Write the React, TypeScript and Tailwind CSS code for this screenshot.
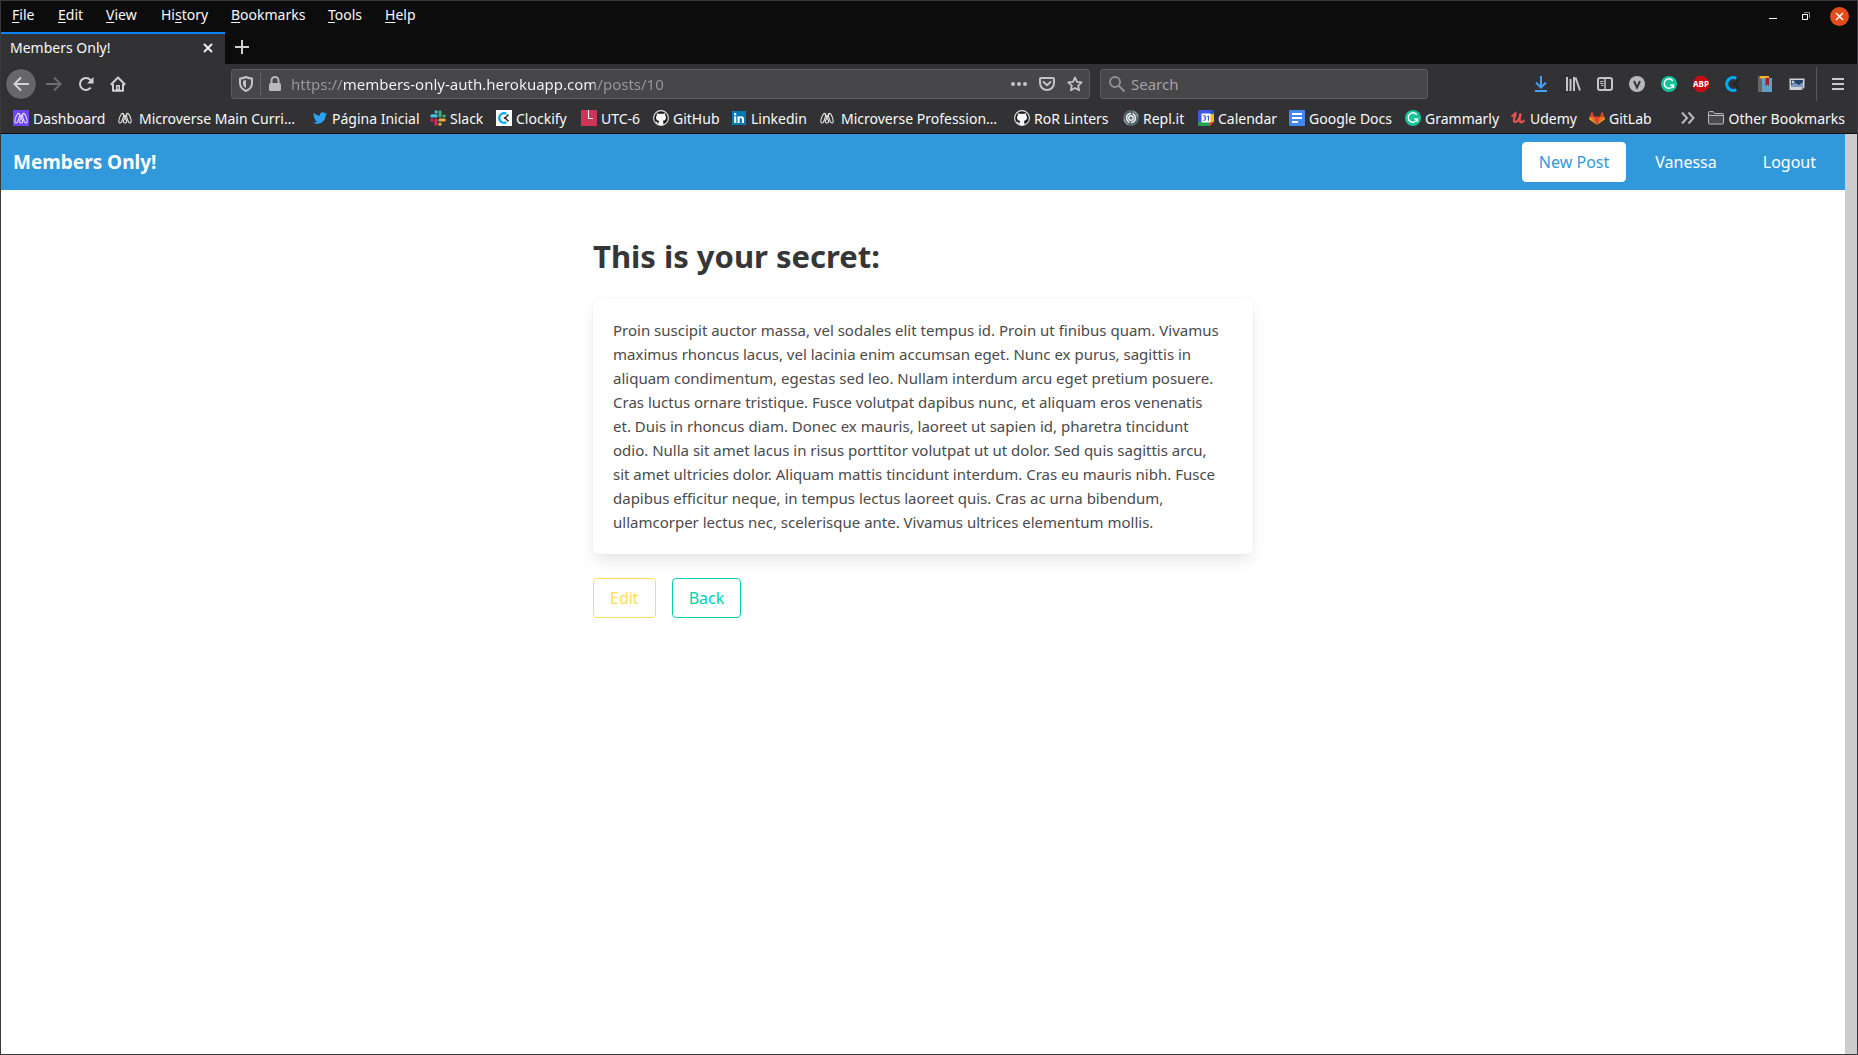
import React from "react";
import { FaTwitter, FaLinkedin } from "react-icons/fa";

function Svg({ children, className = "size-4", box = "0 0 16 16" }: { children: React.ReactNode; className?: string; box?: string }) {
  return (
    <svg viewBox={box} className={className} fill="none" aria-hidden="true">
      {children}
    </svg>
  );
}

function MicroverseIcon({ filled = false }: { filled?: boolean }) {
  return (
    <Svg className="size-4 shrink-0">
      {filled && <rect width="16" height="16" fill="#6f45f5" />}
      <g stroke={filled ? "#e4dcff" : "#e6e6e6"} strokeWidth="1.1" strokeLinecap="round" strokeLinejoin="round">
        <ellipse cx="4.200" cy="8.200" rx="1.700" ry="5" transform="rotate(18 4.200 8.200)" />
        <ellipse cx="11.800" cy="8.200" rx="1.700" ry="5" transform="rotate(-18 11.800 8.200)" />
        <path d="M5.800 3.500C7 4.500 7.500 6.500 9.400 10.500c.7 1.500 0 2.500-1.400 2.500s-2.100-1-1.400-2.500C8.500 6.500 9 4.500 10.200 3.500" />
      </g>
    </Svg>
  );
}

function SlackIcon() {
  return (
    <Svg>
      <g strokeWidth="3.200" strokeLinecap="round">
        <path d="M6.100 5.900H1.900M6.100 1.800v.1" stroke="#4bbfe0" />
        <path d="M10 6V1.900M14.200 6h-.1" stroke="#3dae7c" />
        <path d="M10 10h4.200M10 14.200v-.1" stroke="#e5b13a" />
        <path d="M6 10v4.200M1.900 10H2" stroke="#d8285c" />
      </g>
    </Svg>
  );
}

function ClockifyIcon({ light = false }: { light?: boolean }) {
  return (
    <Svg>
      {light && <rect width="16" height="16" fill="#fff" />}
      <g transform={light ? "translate(2 2) scale(.75)" : undefined}>
        <path d="M11.200 2.400A6.400 6.400 0 1 0 11.200 13.600" stroke="#03a9f4" strokeWidth="3" />
        <path d="M14 3.500 9.600 8l4.400 4.500" stroke={light ? "#333" : "#242426"} strokeWidth="2" />
        <circle cx="9" cy="8" r="1.500" fill={light ? "#333" : "#242426"} />
      </g>
    </Svg>
  );
}

function TimeIcon() {
  return (
    <Svg>
      <rect width="16" height="16" fill="#cb3557" />
      <path d="M7.500 0v8.500H12" stroke="#fff" />
    </Svg>
  );
}

function GithubBadge() {
  return (
    <Svg>
      <circle cx="8" cy="8" r="7.400" fill="#1b1b1d" stroke="#e8e8e8" strokeWidth="1.100" />
      <path
        d="M4 3.300c.9 0 1.500.4 2 .8.600-.2 1.300-.3 2-.3s1.400.1 2 .3c.5-.4 1.100-.8 2-.8.300.8.300 1.400.1 1.900.6.700.9 1.400.9 2.300 0 2.300-1.400 3.100-3.200 3.400.4.400.6.900.6 1.600V15H5.600v-1.400c-1.400.2-1.900-.4-2.300-1.200-.2-.4-.5-.6-.8-.9 1-.2 1.400.4 1.800.9.300.4.800.5 1.400.3.100-.7.300-1.300.5-1.800C4.400 10.600 3 9.800 3 7.500c0-.9.300-1.600.9-2.300-.2-.5-.2-1.100.1-1.900Z"
        fill="#f7f7f7"
      />
    </Svg>
  );
}

function LinkedinBadge() {
  return (
    <span className="flex size-4 items-center justify-center">
      <span className="flex size-[14px] items-center justify-center bg-white">
        <FaLinkedin className="size-4 shrink-0 text-[#0077b5]" />
      </span>
    </span>
  );
}

function ReplIcon() {
  return (
    <Svg>
      <circle cx="8" cy="8" r="8" fill="#56676e" />
      <circle cx="8" cy="8" r="2.200" stroke="#f2f2f2" strokeWidth="1.400" />
      <path d="M8 3.600C5 3.600 3.400 6 3.600 8.400c.2 2 1.300 3.400 2.800 4.200M8 12.400c3 0 4.600-2.400 4.400-4.800-.2-2-1.300-3.400-2.800-4.200" stroke="#f2f2f2" strokeWidth="1.500" />
      <path d="M1.200 9.500c.5 2.500 2 4.300 4 5M14.800 6.500c-.5-2.500-2-4.300-4-5" stroke="#c8d0d3" strokeWidth=".8" />
    </Svg>
  );
}

function CalendarIcon() {
  return (
    <Svg>
      <path d="M1.500 0H12v4H4v12H1.500A1.500 1.500 0 0 1 0 14.500v-13A1.500 1.500 0 0 1 1.500 0Z" fill="#4257e8" />
      <path d="M12 0h2.500A1.500 1.500 0 0 1 16 1.500V4h-4Z" fill="#2b55d0" />
      <path d="M12 4h4v8h-4Z" fill="#fbbc04" />
      <path d="M0 12h12v4H1.500A1.500 1.500 0 0 1 0 14.500Z" fill="#22a152" />
      <path d="M12 16v-4h4Z" fill="#ea4335" />
      <path d="M3.500 3.500H12.500v9h-9Z" fill="#fff" />
      <path d="M5 5.800h2.300v2H6m1.300 0v2.400H5M9.200 6.600l1.300-.8v5" stroke="#4257e8" />
    </Svg>
  );
}

function DocsIcon() {
  return (
    <Svg>
      <rect width="16" height="16" rx="1" fill="#4387f5" />
      <path d="M3 4h10M3 8h10M3 12h6" stroke="#fff" strokeWidth="2" />
    </Svg>
  );
}

function GrammarlyIcon() {
  return (
    <Svg>
      <circle cx="8" cy="8" r="8" fill="#15c39a" />
      <path d="M11.700 4.700A4.700 4.700 0 1 0 12.400 9H9.200M12.400 8.500V12" stroke="#fff" strokeWidth="1.500" />
    </Svg>
  );
}

function UdemyIcon() {
  return (
    <Svg>
      <path d="M1.500 6.200C3 5.800 4.600 4.600 5.500 3c.7 1-1.800 5.500-1.600 7.700.2 2 2.600 1.500 4-.2C9.500 8.600 10 6 10.600 3.600M10.800 3.500c-.9 3-2.300 8.600.4 8.800 1.400 0 2.200-1 3-2.300" stroke="#ea5252" strokeWidth="2.200" strokeLinejoin="round" />
    </Svg>
  );
}

function GitlabIcon() {
  return (
    <Svg>
      <path d="m8 15 3-8.500H5Z" fill="#e24329" />
      <path d="M8 15 5 6.500H.8ZM8 15l3-8.500h4.200Z" fill="#fc6d26" />
      <path d="M.8 6.500 0 9.200l8 5.800ZM15.200 6.500l.8 2.700L8 15Z" fill="#fca326" />
      <path d="M.8 6.500H5L3 1ZM15.200 6.500H11L13 1Z" fill="#e24329" />
    </Svg>
  );
}

const bookmarks = [
  { label: "Dashboard", icon: <MicroverseIcon filled />, width: "w-[104px] gap-1" },
  { label: "Microverse Main Curri…", icon: <MicroverseIcon />, width: "w-[195px] gap-[6px]" },
  { label: "Página Inicial", icon: <FaTwitter className="mx-px size-[14px] text-[#2ba3ef]" />, width: "w-[118px] gap-1" },
  { label: "Slack", icon: <SlackIcon />, width: "w-[66px] gap-1" },
  { label: "Clockify", icon: <ClockifyIcon light />, width: "w-[85px] gap-1" },
  { label: "UTC-6", icon: <TimeIcon />, width: "w-[72px] gap-1" },
  { label: "GitHub", icon: <GithubBadge />, width: "w-[78px] gap-1" },
  { label: "Linkedin", icon: <LinkedinBadge />, width: "w-[88px] gap-1" },
  { label: "Microverse Profession…", icon: <MicroverseIcon />, width: "w-[195px] gap-[6px]" },
  { label: "RoR Linters", icon: <GithubBadge />, width: "w-[109px] gap-1" },
  { label: "Repl.it", icon: <ReplIcon />, width: "w-[75px] gap-1" },
  { label: "Calendar", icon: <CalendarIcon />, width: "w-[91px] gap-1" },
  { label: "Google Docs", icon: <DocsIcon />, width: "w-[116px] gap-1" },
  { label: "Grammarly", icon: <GrammarlyIcon />, width: "w-[105px] gap-1" },
  { label: "Udemy", icon: <UdemyIcon />, width: "w-[79px] gap-1" },
  { label: "GitLab", icon: <GitlabIcon />, width: "w-[65px] gap-1" },
];

const menus: { before?: string; key: string; after: string; width: string }[] = [
  { key: "F", after: "ile", width: "w-[46px]" },
  { key: "E", after: "dit", width: "w-[48px]" },
  { key: "V", after: "iew", width: "w-[55px]" },
  { before: "Hi", key: "s", after: "tory", width: "w-[70px]" },
  { key: "B", after: "ookmarks", width: "w-[97px]" },
  { key: "T", after: "ools", width: "w-[57px]" },
  { key: "H", after: "elp", width: "w-[57px]" },
];

function MenuBar() {
  return (
    <div className="flex h-[31px] shrink-0 items-start justify-between">
      <nav aria-label="Menu" className="flex h-[29px] pl-[11px]">
        {menus.map((m) => (
          <button key={m.key + m.after} className={"pb-[2px] text-left whitespace-nowrap " + m.width}>
            {m.before}
            <span className="underline decoration-1 underline-offset-2">{m.key}</span>
            {m.after}
          </button>
        ))}
      </nav>
      <div className="flex h-[30px] items-center gap-[15px] pr-2">
        <button aria-label="Minimize" className="flex size-[18px] items-center justify-center">
          <Svg className="size-[10px]" box="0 0 10 10"><path d="M1 7.500h8" stroke="#fff" /></Svg>
        </button>
        <button aria-label="Restore" className="flex size-[18px] items-center justify-center">
          <Svg className="size-[10px]" box="0 0 10 10">
            <path d="M1.500 3.500h5v5h-5z" stroke="#fff" />
            <path d="M3 1.500h5.500V7" stroke="#8a8a8a" />
          </Svg>
        </button>
        <button aria-label="Close window" className="flex size-[19px] items-center justify-center rounded-full bg-[#e34c1a]">
          <Svg className="size-[9px]" box="0 0 9 9"><path d="m1 1 7 7m0-7L1 8" stroke="#fff" strokeWidth="1.500" /></Svg>
        </button>
      </div>
    </div>
  );
}

function TabStrip() {
  return (
    <div className="flex h-8 shrink-0">
      <div className="flex w-56 items-center justify-between border-t-2 border-[#0a84ff] bg-[#323234] pr-[11px] pb-[3px] pl-[9px]">
        <span>Members Only!</span>
        <button aria-label="Close tab">
          <Svg className="size-3" box="0 0 12 12"><path d="m2 2 8 8m0-8-8 8" stroke="#f9f9fa" strokeWidth="1.800" /></Svg>
        </button>
      </div>
      <button aria-label="New tab" className="flex w-[34px] items-center justify-center pb-[2px]">
        <Svg><path d="M8 1v14M1 8h14" stroke="#d0d0d2" strokeWidth="2" /></Svg>
      </button>
    </div>
  );
}

const toolIcons = [
  {
    label: "Downloads",
    icon: <path d="M8 0v11M3 6.500l5 5L13 6.500M2 15h12" stroke="#45a1ff" strokeWidth="2" />,
  },
  {
    label: "Library",
    icon: <path d="M2 1v14M5.500 3v12M9 1v14M10.500 1.500l4.500 13" stroke="#c4c4c6" strokeWidth="2" />,
  },
  {
    label: "Sidebars",
    icon: (
      <g stroke="#c4c4c6">
        <rect x="1" y="2" width="14" height="12" rx="2" strokeWidth="2" />
        <path d="M8 2v12" strokeWidth="1.500" />
        <path d="M3 5.500h3.500M3 7.500h3.500M4 9.500h2.500" />
      </g>
    ),
  },
  {
    label: "Vimium",
    icon: (
      <>
        <circle cx="8" cy="8" r="8" fill="#b9b9bb" />
        <path d="m5 5 3 6.500L11 5" stroke="#38383a" strokeWidth="2" />
      </>
    ),
  },
];

function ToolIcons() {
  return (
    <div className="flex items-center">
      {toolIcons.map((t) => (
        <button key={t.label} aria-label={t.label} className="flex size-8 items-center justify-center">
          <Svg>{t.icon}</Svg>
        </button>
      ))}
      <button aria-label="Grammarly" className="flex size-8 items-center justify-center"><GrammarlyIcon /></button>
      <button className="flex size-8 items-center justify-center">
        <span className="flex h-4 w-4 items-center justify-center bg-[#c70d12] text-[8px] font-bold text-white [clip-path:polygon(30%_0,70%_0,100%_30%,100%_70%,70%_100%,30%_100%,0_70%,0_30%)]">
          ABP
        </span>
      </button>
      <button aria-label="Clockify" className="flex size-8 items-center justify-center"><ClockifyIcon /></button>
      <button aria-label="Dictionary" className="flex size-8 items-center justify-center">
        <Svg>
          <path d="M1 0h4v16H1z" fill="#6b6560" />
          <path d="M5 2h10v14H5z" fill="#5f9fc9" />
          <path d="M3 0h9v2.500H3z" fill="#f0b429" />
          <path d="M8.500 2h3.500v8l-1.700-1.500L8.500 10z" fill="#a81e28" />
        </Svg>
      </button>
      <button aria-label="Screenshot" className="flex size-8 items-center justify-center">
        <Svg>
          <path d="M.5 2.500h15v9L12.500 14H.5z" fill="#cfd2d6" />
          <path d="M2 4h12v7H2z" fill="#24406e" />
          <path d="M2 9l4-2 4 2 4-3v5H2z" fill="#7d9bc4" />
          <path d="M4 4.500v3M2.500 6h3" stroke="#fff" />
          <path d="M12.500 14v-2.500h3z" fill="#8d9095" />
        </Svg>
      </button>
      <div className="mr-[5px] ml-[3px] h-[34px] w-px bg-[#5a5a5c]" />
      <button aria-label="Open menu" className="flex size-8 items-center justify-center">
        <Svg><path d="M2 3h12M2 8h12M2 13h12" stroke="#c9c9cb" strokeWidth="2" /></Svg>
      </button>
    </div>
  );
}

function Toolbar() {
  return (
    <div className="flex h-10 shrink-0 items-center bg-[#323234] pr-[3px] pl-1">
      <div className="flex items-center">
        <button aria-label="Back" className="mr-px flex size-8 items-center justify-center rounded-full border border-[#29292b] bg-[#666668]">
          <Svg><path d="M16 8H1.500M8 1.500 1.500 8 8 14.500" stroke="#d2d2d4" strokeWidth="2" /></Svg>
        </button>
        <button aria-label="Forward" className="flex size-8 items-center justify-center">
          <Svg><path d="M0 8h14.500M8 1.500 14.500 8 8 14.500" stroke="#6e6e70" strokeWidth="2" /></Svg>
        </button>
        <button aria-label="Reload" className="flex size-8 items-center justify-center">
          <Svg>
            <path d="M12.700 11.700A6 6 0 1 1 12.400 3.900L13.500 5.500" stroke="#d2d2d4" strokeWidth="2" />
            <path d="M15.500 1v6.500H9z" fill="#d2d2d4" />
          </Svg>
        </button>
        <button aria-label="Home" className="flex size-8 items-center justify-center">
          <Svg>
            <path d="M.8 8.800 8 1.500l7.200 7.300" stroke="#d2d2d4" strokeWidth="2" strokeLinejoin="round" />
            <path d="M3 8v6.800h10V8" stroke="#d2d2d4" strokeWidth="2" strokeLinejoin="round" />
            <path d="M6 9h4v6H6z" fill="#d2d2d4" />
            <path d="M7.500 10.500h1V13h-1z" fill="#323234" />
          </Svg>
        </button>
      </div>
      <div className="ml-[97px] flex h-[30px] flex-1 items-center rounded-[3px] border border-[#5c5c5e] bg-[#474749] pr-[6px] pl-[6px]">
        <Svg>
          <path d="M8 1C6 2 4 2.500 2 2.500V7c0 4 2.500 6.500 6 8 3.500-1.500 6-4 6-8V2.500C12 2.500 10 2 8 1Z" stroke="#c4c4c6" strokeWidth="2" strokeLinejoin="round" />
          <path d="M8 4v8C6 11 5 9.500 5 7.500V4.800C6 4.800 7 4.500 8 4Z" fill="#c4c4c6" />
        </Svg>
        <div className="mx-[6px] h-[22px] w-px bg-[#626264]" />
        <Svg>
          <path d="M4.500 8V4.500a3.500 3.500 0 0 1 7 0V8" stroke="#b9b9bb" strokeWidth="2" />
          <rect x="2" y="7" width="12" height="8" rx="1.500" fill="#b9b9bb" />
        </Svg>
        <input
          aria-label="Address"
          type="text"
          defaultValue="https://members-only-auth.herokuapp.com/posts/10"
          className="ml-2 min-w-0 flex-1 bg-[linear-gradient(to_right,#9a9a9c_52px,#f9f9fa_52px,#f9f9fa_304px,#9a9a9c_304px)] bg-clip-text text-[15px] text-transparent outline-none"
        />
        <div className="flex items-center gap-3">
          <button aria-label="Page actions">
            <Svg><g fill="#c4c4c6"><circle cx="2" cy="8" r="2" /><circle cx="8" cy="8" r="2" /><circle cx="14" cy="8" r="2" /></g></Svg>
          </button>
          <button aria-label="Save to Pocket">
            <Svg>
              <path d="M2 2h12a1 1 0 0 1 1 1v4a7 7 0 0 1-14 0V3a1 1 0 0 1 1-1Z" stroke="#c4c4c6" strokeWidth="2" />
              <path d="m4.500 6 3.500 3.300L11.500 6" stroke="#c4c4c6" strokeWidth="2" strokeLinecap="round" strokeLinejoin="round" />
            </Svg>
          </button>
          <button aria-label="Bookmark this page">
            <Svg>
              <path d="m8 1.500 2 4.300 4.700.6-3.500 3.200.9 4.700L8 12l-4.100 2.300.9-4.700L1.300 6.400 6 5.800Z" stroke="#c4c4c6" strokeWidth="1.800" strokeLinejoin="round" />
            </Svg>
          </button>
        </div>
      </div>
      <label className="mr-[97px] ml-[10px] flex h-[30px] w-[328px] items-center rounded-[3px] border border-[#5c5c5e] bg-[#474749] px-2">
        <Svg>
          <circle cx="6" cy="6" r="5" stroke="#8f8f91" strokeWidth="2" />
          <path d="m9.500 9.500 6 6" stroke="#8f8f91" strokeWidth="2" />
        </Svg>
        <input aria-label="Search" type="search" placeholder="Search" className="ml-[6px] min-w-0 flex-1 bg-transparent text-[15px] placeholder-[#a3a3a5] outline-none" />
      </label>
      <ToolIcons />
    </div>
  );
}

function BookmarksBar() {
  return (
    <nav aria-label="Bookmarks" className="flex h-[30px] shrink-0 items-center justify-between border-b border-[#0c0c0d] bg-[#323234] pr-3 pb-px pl-3">
      <div className="flex">
        {bookmarks.map((b) => (
          <a key={b.label} href="#" className={"flex shrink-0 items-center whitespace-nowrap " + b.width}>
            <span className="shrink-0">{b.icon}</span>
            {b.label}
          </a>
        ))}
      </div>
      <div className="flex items-center">
        <button aria-label="More bookmarks" className="mr-3">
          <Svg><path d="m2 2.500 5 5.500-5 5.500M8.500 2.500l5 5.500-5 5.500" stroke="#b9b9bb" strokeWidth="2" /></Svg>
        </button>
        <button className="flex items-center gap-[5px] whitespace-nowrap">
          <Svg>
            <path d="M.5 13V2.500a1 1 0 0 1 1-1h3.700l1.500 2h7.800a1 1 0 0 1 1 1V13a1 1 0 0 1-1 1h-13a1 1 0 0 1-1-1Z" fill="#4a4a4c" stroke="#b9b9bb" />
            <path d="M.5 5.500h15" stroke="#b9b9bb" />
          </Svg>
          Other Bookmarks
        </button>
      </div>
    </nav>
  );
}

function PostPage() {
  return (
    <div className="flex flex-1 bg-white">
      <div className="flex-1 text-base leading-6 text-[#4a4a4a]">
        <header className="flex h-14 items-center justify-between bg-[#3298dc] px-3 text-white">
          <a href="#" className="text-[19px] font-bold">Members Only!</a>
          <nav aria-label="Account" className="flex items-center gap-3">
            <a href="#" className="flex h-10 items-center rounded border border-white bg-white px-4 text-[#3298dc]">New Post</a>
            <a href="#" className="flex h-10 items-center rounded border border-transparent px-4">Vanessa</a>
            <a href="#" className="flex h-10 items-center rounded border border-transparent px-4">Logout</a>
          </nav>
        </header>
        <main className="mx-auto max-w-[660px] pt-12">
          <h1 className="mb-6 text-[31px] leading-9 font-bold text-[#363636]">This is your secret:</h1>
          <p className="mb-6 rounded-md py-5 pr-8 pl-5 text-[15px] leading-6 shadow-[0_8px_16px_-2px_rgba(10,10,10,0.1),0_0_0_1px_rgba(10,10,10,0.02)]">
            Proin suscipit auctor massa, vel sodales elit tempus id. Proin ut finibus quam. Vivamus maximus rhoncus lacus, vel lacinia enim accumsan eget. Nunc ex purus, sagittis in aliquam condimentum, egestas sed leo. Nullam interdum arcu eget pretium posuere. Cras luctus ornare tristique. Fusce volutpat dapibus nunc, et aliquam eros venenatis et. Duis in rhoncus diam. Donec ex mauris, laoreet ut sapien id, pharetra tincidunt odio. Nulla sit amet lacus in risus porttitor volutpat ut ut dolor. Sed quis sagittis arcu, sit amet ultricies dolor. Aliquam mattis tincidunt interdum. Cras eu mauris nibh. Fusce dapibus efficitur neque, in tempus lectus laoreet quis. Cras ac urna bibendum, ullamcorper lectus nec, scelerisque ante. Vivamus ultrices elementum mollis.
          </p>
          <div className="flex gap-4">
            <a href="#" className="flex h-10 items-center rounded border border-[#ffdd57] px-4 text-[#ffdd57]">Edit</a>
            <a href="#" className="flex h-10 items-center rounded border border-[#00d1b2] px-4 text-[#00d1b2]">Back</a>
          </div>
        </main>
      </div>
      <div className="w-3 bg-[#cdcdcd]" />
    </div>
  );
}

export default function App() {
  return (
    <div className="flex min-h-screen flex-col border border-[#39393b] bg-[#0c0c0d] font-['Noto_Sans',sans-serif] text-[14px] text-[#f9f9fa]">
      <MenuBar />
      <TabStrip />
      <Toolbar />
      <BookmarksBar />
      <PostPage />
    </div>
  );
}
